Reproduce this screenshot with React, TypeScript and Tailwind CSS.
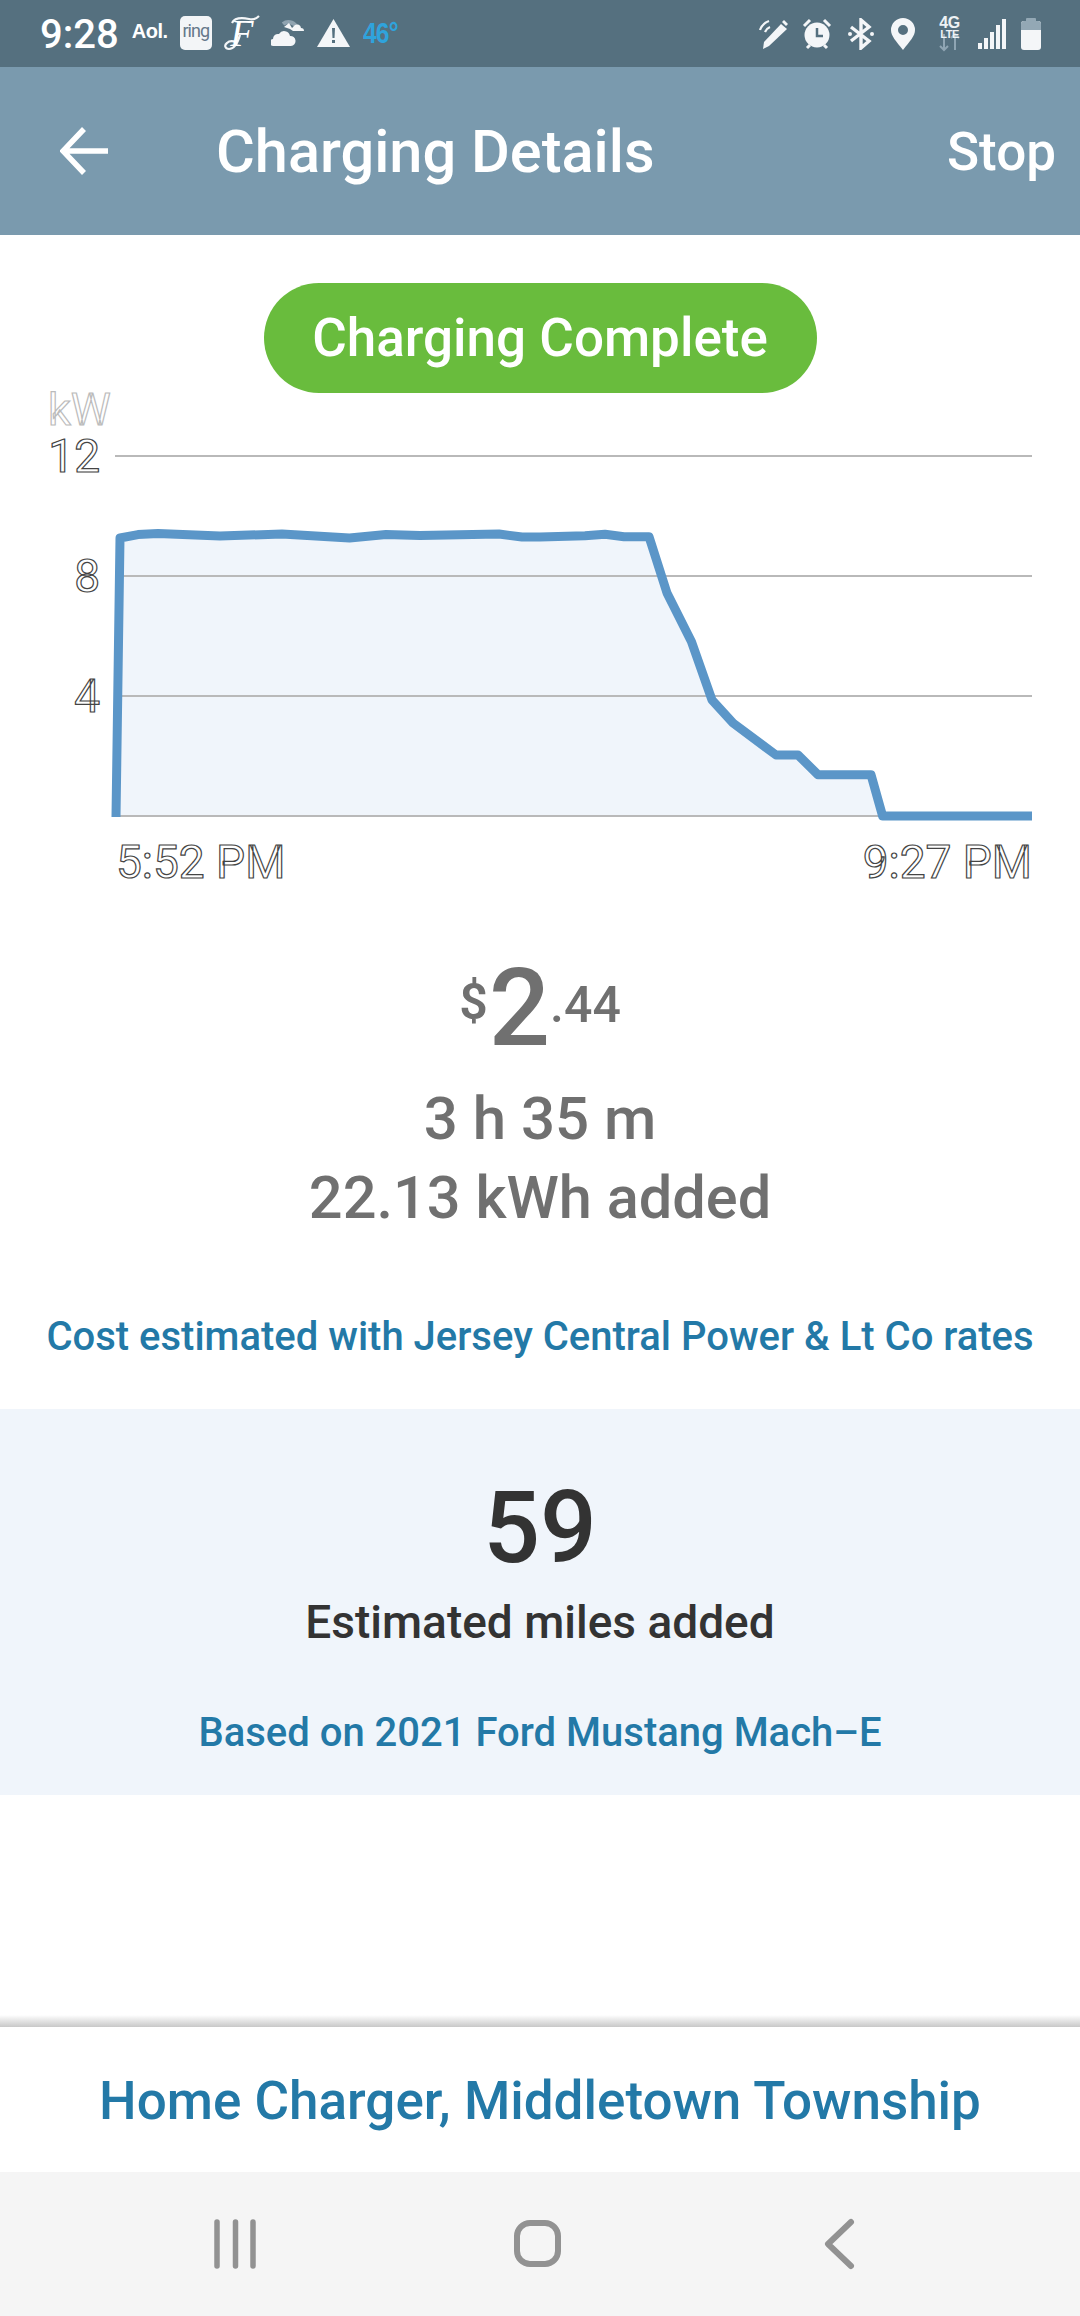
import React from "react";

// chart samples, in page pixels
const curve: [number, number][] = [
  [116, 817], [120, 538], [138, 534.6], [158, 533.6], [220, 536], [282, 534], [349.5, 538], [386, 534.6],
  [420, 535.6], [499, 534], [522, 537], [540, 537], [585, 535.7], [605, 534.3], [624, 536.7], [649, 536.7],
  [667, 593], [691.5, 641.7], [712, 700], [733, 723], [776, 755], [798, 755], [818, 774.7], [871, 774.7],
  [882.6, 816], [1032, 816],
];
const linePoints = curve.map((p) => p.join(",")).join(" ");

function Chart() {
  return (
    <svg viewBox="0 393 1080 500" className="block w-[1080px] h-[500px] overflow-visible">
      <polygon points={`${linePoints} 116,816`} fill="#f0f5fb" />
      {[456, 576, 696, 816].map((y) => (
        <line key={y} x1="115" x2="1032" y1={y} y2={y} stroke="#b9b9b9" strokeWidth="2" />
      ))}
      <polyline points={linePoints} fill="none" stroke="#5b96c8" strokeWidth="9" strokeLinejoin="round" />
      <g fontFamily="Roboto, sans-serif" fontSize="46" fill="#fff" stroke="#444" strokeWidth="1.2">
        <text x="48" y="425" fontSize="45" stroke="#bbb">kW</text>
        <text x="100" y="472" textAnchor="end">12</text>
        <text x="100" y="592" textAnchor="end">8</text>
        <text x="100" y="712" textAnchor="end">4</text>
        <text x="116" y="878">5:52 PM</text>
        <text x="1032" y="878" textAnchor="end">9:27 PM</text>
      </g>
    </svg>
  );
}

function StatusBar() {
  return (
    <div className="h-[67px] bg-[#55707f] flex items-center pl-[40px] pr-[39px] text-white">
      <span className="text-[40px] leading-none font-medium mt-[2px]">9:28</span>
      <span className="ml-[13px] w-[36px] whitespace-nowrap text-[20px] leading-none font-bold font-['Liberation_Sans',sans-serif] mb-[6px] tracking-[-0.5px]">Aol.</span>
      <span className="ml-[12px] w-[32px] h-[34px] rounded-[5px] bg-[#f3f5f7] text-[#66788a] text-[18px] leading-[30px] tracking-[-1px] text-center mb-[2px]">ring</span>
      {/* script F with its flourishes */}
      <div className="relative ml-[12px] w-[36px] h-[36px] mb-[2px]">
        <svg viewBox="0 0 36 36" className="absolute inset-0 w-[36px] h-[36px]">
          <path d="M8 8c3-6 12-5 17-4 4 1 7 0 10-3M16 20c-2 7-6 14-11 14-4 0-5-4-2-6 2-2 6-2 9-1" fill="none" stroke="#f4f6f8" strokeWidth="2.2" />
        </svg>
        <span className="absolute inset-0 text-[38px] leading-[36px] italic text-center font-['Liberation_Serif',serif]">F</span>
      </div>
      {/* weather */}
      <svg viewBox="0 0 34 28" className="ml-[11px] w-[34px] h-[28px] mb-[2px]">
        <path d="M12 5a9 9 0 0 1 13 2" fill="none" stroke="#8fa3b0" strokeWidth="4" />
        <path d="M3 27a3.5 3.5 0 0 1-1-7 5 5 0 0 1 6-5 6 6 0 0 1 11 2 5 5 0 0 1 1 10z" fill="#f4f6f8" />
        <path d="M13 8l5-4 3 5 3-3a4 4 0 0 1 6 3 3 3 0 0 1 3 3H22l-3-2z" fill="#f4f6f8" />
      </svg>
      {/* warning */}
      <svg viewBox="0 0 33 28" className="ml-[12px] w-[33px] h-[28px] mb-[2px]">
        <path d="M16.5 0L33 28H0z" fill="#f4f6f8" />
        <path d="M15 9h3l-.5 10h-2zM15 21h3v3h-3z" fill="#55707f" />
      </svg>
      <span className="ml-[13px] text-[30px] leading-none font-bold text-[#2fa3dc] tracking-[-1px] mb-[2px] origin-left scale-x-[0.82] font-['Liberation_Sans',sans-serif]">46°</span>

      <div className="ml-auto flex items-center">
        {/* pen + nfc waves */}
        <svg viewBox="0 0 30 32" className="w-[30px] h-[32px]">
          <path d="M4 31l1-7L22 6l6 5L10 28z" fill="#f4f6f8" />
          <path d="M23 4l2-2 4 4-2 2z" fill="#f4f6f8" />
          <path d="M1 12a15 15 0 0 1 9-9M6 14a9 9 0 0 1 5-5" fill="none" stroke="#f4f6f8" strokeWidth="2.2" />
        </svg>
        {/* alarm */}
        <svg viewBox="0 0 30 32" className="ml-[13px] w-[30px] h-[32px]">
          <circle cx="15" cy="17" r="12.5" fill="#f4f6f8" />
          <path d="M15 10v8h6" fill="none" stroke="#55707f" strokeWidth="2.5" />
          <path d="M2 8l6-6M28 8l-6-6M5 30l3-3M25 30l-3-3" fill="none" stroke="#f4f6f8" strokeWidth="3" />
        </svg>
        {/* bluetooth */}
        <svg viewBox="0 0 26 32" className="ml-[16px] w-[26px] h-[32px]">
          <path d="M3 9l18 14-8 7V2l8 7L3 23" fill="none" stroke="#f4f6f8" strokeWidth="3.4" />
          <circle cx="2" cy="16" r="2" fill="#f4f6f8" />
          <circle cx="24" cy="16" r="2" fill="#f4f6f8" />
        </svg>
        {/* location */}
        <svg viewBox="0 0 24 32" className="ml-[17px] w-[24px] h-[32px]">
          <path fillRule="evenodd" d="M12 32C5 23 0 18 0 12a12 12 0 0 1 24 0c0 6-5 11-12 20zM12 7a5 5 0 1 0 0 10 5 5 0 0 0 0-10z" fill="#f4f6f8" />
        </svg>
        {/* 4G LTE with data arrows */}
        <div className="relative ml-[23px] w-[23px] h-[36px] text-center text-[#eef2f5] font-bold font-['Liberation_Sans',sans-serif]">
          <svg viewBox="0 0 23 36" className="absolute inset-0 w-[23px] h-[36px]">
            <path d="M6 18v16M2 30l4 4 4-4M17 34V18M13 22l4-4 4 4" fill="none" stroke="#8fa5b3" strokeWidth="2" />
          </svg>
          <div className="relative text-[16px] leading-[14px] tracking-[-0.5px]">4G</div>
          <div className="relative text-[11px] leading-[9px] tracking-[-0.5px]">LTE</div>
        </div>
        {/* signal */}
        <div className="ml-[17px] flex items-end gap-[2px] h-[30px]">
          <div className="w-[4px] h-[6px] bg-[#f4f6f8]" />
          <div className="w-[4px] h-[11px] bg-[#f4f6f8]" />
          <div className="w-[4px] h-[17px] bg-[#f4f6f8]" />
          <div className="w-[4px] h-[24px] bg-[#f4f6f8]" />
          <div className="w-[4px] h-[30px] bg-[#f4f6f8]" />
        </div>
        {/* battery */}
        <div className="ml-[15px] flex flex-col items-center w-[20px]">
          <div className="w-[10px] h-[3px] rounded-t-[1px] bg-[#93a8b5]" />
          <div className="w-[20px] h-[29px] rounded-[3px] overflow-hidden bg-[#f4f6f8]">
            <div className="h-[9px] bg-[#93a8b5]" />
          </div>
        </div>
      </div>
    </div>
  );
}

export default function App() {
  return (
    <div className="w-[1080px] h-[2316px] flex flex-col bg-white font-['Roboto',sans-serif] overflow-hidden">
      <StatusBar />

      {/* Header */}
      <div className="h-[168px] bg-[#7a9aae] flex items-center text-white font-medium">
        <svg viewBox="0 0 48 48" className="ml-[60px] w-[48px] h-[48px]">
          <path d="M48 24H4M24 2L3 24l21 22" fill="none" stroke="#fff" strokeWidth="5.5" />
        </svg>
        <span className="ml-[108px] mt-[3px] text-[59.5px] leading-none">Charging Details</span>
        <span className="ml-auto mr-[24px] mt-[2px] text-[53px] leading-none">Stop</span>
      </div>

      {/* Status pill */}
      <div className="mt-[48px] mx-auto w-[553px] h-[110px] pt-[2px] rounded-full bg-[#69bc3d] flex items-center justify-center text-white text-[53px] font-medium">
        Charging Complete
      </div>

      <Chart />

      {/* Totals */}
      <div className="flex flex-col items-center text-[#707070] font-medium">
        <div className="flex items-start h-[160px] pt-[70px]">
          <span className="text-[50px] leading-[50px] mt-[14px] font-semibold">$</span>
          <span className="text-[108px] leading-[100px] ml-[1px] mt-[-5px]">2</span>
          <span className="text-[50px] leading-[50px] mt-[17px]">.44</span>
        </div>
        <div className="text-[60px] leading-[78px] mt-[27px]">3 h 35 m</div>
        <div className="text-[59.5px] leading-[78px] mt-[1px]">22.13 kWh added</div>
      </div>
      <div className="mt-[72px] text-center text-[40px] leading-[56px] font-medium text-[#2379a7]">
        Cost estimated with Jersey Central Power &amp; Lt Co rates
      </div>

      {/* Range estimate */}
      <div className="mt-[44px] h-[386px] bg-[#f0f5fb] flex flex-col items-center">
        <div className="mt-[64px] text-[100px] leading-[110px] font-medium text-[#333]">59</div>
        <div className="mt-[9px] text-[46px] leading-[60px] font-medium text-[#333]">Estimated miles added</div>
        <div className="mt-[56px] text-[40px] leading-[50px] font-medium text-[#2379a7]">Based on 2021 Ford Mustang Mach–E</div>
      </div>

      <div className="flex-1" />

      {/* Charger name */}
      <div className="h-[12px] bg-gradient-to-b from-white to-[#c8c8c8]" />
      <div className="h-[145px] pt-[4px] flex items-center justify-center text-[53px] font-medium text-[#2379a7]">
        Home Charger, Middletown Township
      </div>

      {/* Android nav bar */}
      <div className="h-[144px] bg-[#f5f5f5]">
        <svg viewBox="0 0 1080 144" className="block w-[1080px] h-[144px]">
          <path d="M217 50v44M235.5 50v44M253 50v44" stroke="#929292" strokeWidth="5.5" strokeLinecap="round" />
          <rect x="517" y="51" width="41" height="41" rx="13" fill="none" stroke="#929292" strokeWidth="6" />
          <path d="M851 50l-23 22 23 22" fill="none" stroke="#929292" strokeWidth="6" strokeLinecap="round" strokeLinejoin="round" />
        </svg>
      </div>
    </div>
  );
}
